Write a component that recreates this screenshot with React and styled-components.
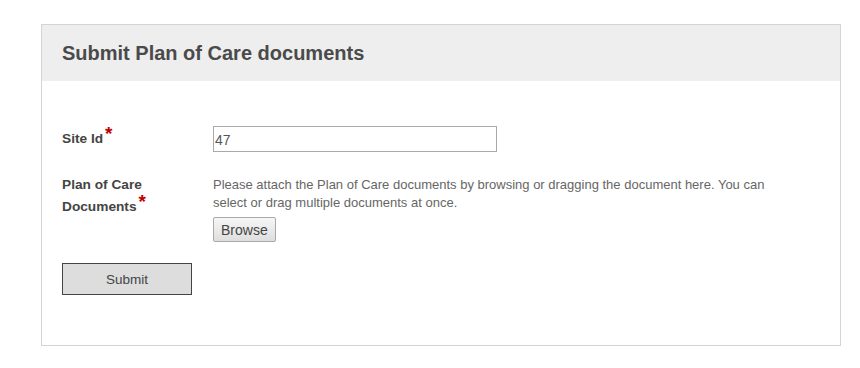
import React from 'react';
import styled, { createGlobalStyle } from 'styled-components';

const GlobalStyle = createGlobalStyle`
  body {
    margin: 0;
    background: #fff;
    font-family: "Liberation Sans", Arial, sans-serif;
  }
`;

const Page = styled.div`
  padding: 24px 19px 0 41px;
`;

const Panel = styled.section`
  width: 798px;
  height: 320px;
  border: 1px solid #d4d4d4;
  background: #fff;
`;

const Header = styled.div`
  height: 56px;
  background: #eeeeee;
  display: flex;
  align-items: center;
  padding: 0 20px;
`;

const Title = styled.h2`
  margin: 0;
  font-size: 20px;
  font-weight: bold;
  color: #4a4a4a;
`;

const Body = styled.form`
  padding: 45px 20px 0 20px;
  display: flex;
  flex-direction: column;
`;

const Row = styled.div`
  display: flex;
  align-items: flex-start;
  margin-bottom: ${(p) => p.gap || 0}px;
`;

const Label = styled.label`
  width: 151px;
  flex: none;
  font-size: 13.7px;
  font-weight: bold;
  color: #444;
  line-height: 22px;
  padding-top: ${(p) => p.top || 0}px;
`;

const Required = styled.span`
  color: #c00000;
  font-size: 19px;
  position: relative;
  top: -3px;
  margin-left: 2px;
  line-height: 0;
`;

const TextInput = styled.input`
  width: 284px;
  height: 26px;
  box-sizing: border-box;
  border: 1px solid #a9a9a9;
  padding: 2px 1px 0;
  font-family: inherit;
  font-size: 14px;
  color: #555;
  margin: 0;
`;

const Field = styled.div`
  display: flex;
  flex-direction: column;
  align-items: flex-start;
  padding-top: 2px;
`;

const Hint = styled.p`
  margin: 0;
  width: 580px;
  font-size: 13px;
  line-height: 18px;
  color: #666;
`;

const Button = styled.button`
  font-family: inherit;
  color: #444;
  cursor: pointer;
  margin: 0;
  border-radius: 0;
  ${(p) =>
    p.primary
      ? `
    width: 130px;
    height: 32px;
    background: #dddddd;
    border: 1px solid #444;
    font-size: 13.5px;
  `
      : `
    height: 25px;
    margin-top: 5px;
    padding: 0 7px;
    background: linear-gradient(#f6f6f6, #dedede);
    border: 1px solid #a9a9a9;
    border-radius: 2px;
    font-size: 14px;
  `}
`;

const App = () => (
  <Page>
    <GlobalStyle />
    <Panel>
      <Header>
        <Title>Submit Plan of Care documents</Title>
      </Header>
      <Body onSubmit={(e) => e.preventDefault()}>
        <Row gap={22}>
          <Label top={2}>
            Site Id<Required>*</Required>
          </Label>
          <TextInput defaultValue="47" />
        </Row>
        <Row gap={21}>
          <Label>
            Plan of Care
            <br />
            Documents<Required>*</Required>
          </Label>
          <Field>
            <Hint>
              Please attach the Plan of Care documents by browsing or dragging the document here. You can select or
              drag multiple documents at once.
            </Hint>
            <Button type="button">Browse</Button>
          </Field>
        </Row>
        <Row>
          <Button primary type="submit">
            Submit
          </Button>
        </Row>
      </Body>
    </Panel>
  </Page>
);

export default App;
